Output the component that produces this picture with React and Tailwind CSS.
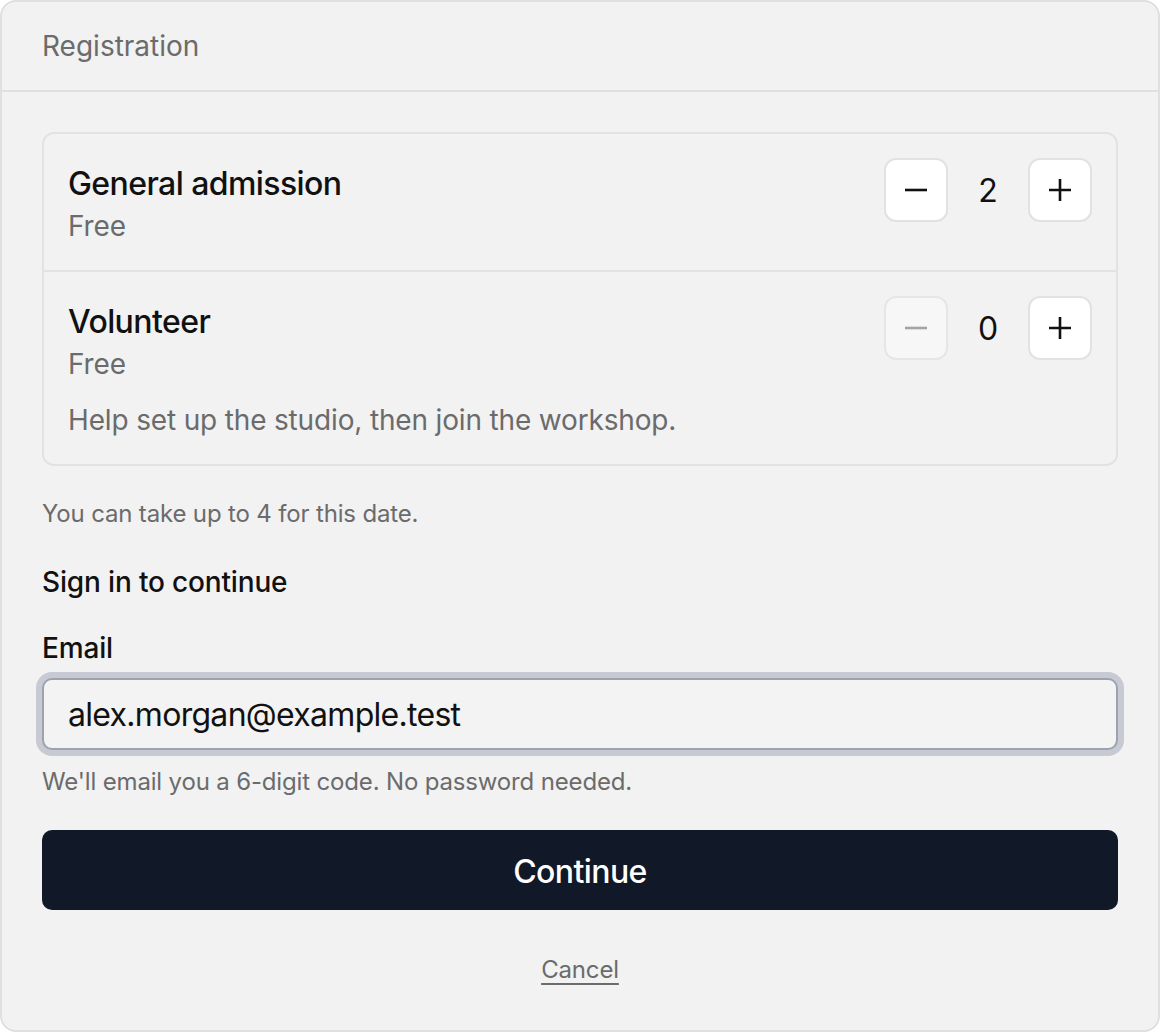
import React from "react";

function MinusIcon({ className }) {
  return (
    <svg width="24" height="24" viewBox="0 0 24 24" className={className} fill="none" stroke="currentColor" strokeWidth="2.6" strokeLinecap="butt">
      <path d="M1 12h22" />
    </svg>
  );
}

function PlusIcon({ className }) {
  return (
    <svg width="24" height="24" viewBox="0 0 24 24" className={className} fill="none" stroke="currentColor" strokeWidth="2.6" strokeLinecap="butt">
      <path d="M1 12h22M12 1v22" />
    </svg>
  );
}

function Stepper({ value, minDisabled }) {
  return (
    <div className="flex items-center">
      <button
        className={
          minDisabled
            ? "w-16 h-16 flex items-center justify-center rounded-[12px] border-2 border-[#e6e6e6] bg-[#f7f7f7] text-[#a3a3a3]"
            : "w-16 h-16 flex items-center justify-center rounded-[12px] border-2 border-[#e2e2e2] bg-white text-[#111111]"
        }
      >
        <MinusIcon />
      </button>
      <span className="w-20 text-center text-[32px] leading-[48px] text-[#111111] pt-[2px]">{value}</span>
      <button className="w-16 h-16 flex items-center justify-center rounded-[12px] border-2 border-[#e2e2e2] bg-white text-[#111111]">
        <PlusIcon />
      </button>
    </div>
  );
}

export default function App() {
  return (
    <div className="w-[1160px] h-[1032px] bg-white" style={{ fontFamily: "Inter, 'Noto Sans', sans-serif" }}>
      <div className="h-full border-2 border-[#e0e0e0] rounded-[16px] bg-[#f2f2f2] flex flex-col tracking-[-0.01em]">
        <div className="px-10 py-6 border-b-2 border-[#e0e0e0]">
          <h2 className="text-[28px] leading-[40px] text-[#6b6b6b] tracking-normal">Registration</h2>
        </div>
        <div className="px-10 pt-10 pb-10 flex flex-col">
          <div className="border-2 border-[#e2e2e2] rounded-[12px]">
            <div className="p-6 flex items-start justify-between border-b-2 border-[#e2e2e2]">
              <div>
                <div className="text-[32px] leading-[44px] font-medium text-[#111111] tracking-[-0.018em] pt-[4px]">General admission</div>
                <div className="text-[28px] leading-[40px] text-[#6b6b6b]">Free</div>
              </div>
              <Stepper value={2} />
            </div>
            <div className="p-6 flex items-start justify-between">
              <div>
                <div className="text-[32px] leading-[44px] font-medium text-[#111111] tracking-[-0.018em] pt-[4px]">Volunteer</div>
                <div className="text-[28px] leading-[40px] text-[#6b6b6b]">Free</div>
                <div className="mt-4 text-[28px] leading-[40px] text-[#6b6b6b]">Help set up the studio, then join the workshop.</div>
              </div>
              <Stepper value={0} minDisabled />
            </div>
          </div>
          <p className="mt-8 text-[24px] leading-[32px] text-[#6b6b6b]">You can take up to 4 for this date.</p>
          <h3 className="mt-8 text-[28px] leading-[40px] font-medium text-[#111111]">Sign in to continue</h3>
          <label className="mt-[26px] text-[28px] leading-[40px] font-medium text-[#111111]">Email</label>
          <div className="mt-[10px] rounded-[12px]">
            <input
              readOnly
              value="alex.morgan@example.test"
              className="w-full h-[72px] px-6 rounded-[10px] border-2 border-[#9ca3af] bg-[#f3f3f3] text-[32px] text-[#111111] outline-none ring-[6px] ring-[#c7cad2] tracking-[-0.022em]"
              style={{ fontFamily: "Inter, 'Noto Sans', sans-serif" }}
            />
          </div>
          <p className="mt-4 text-[24px] leading-[32px] text-[#6b6b6b]">We'll email you a 6-digit code. No password needed.</p>
          <button className="mt-8 h-20 w-full rounded-[10px] bg-[#111827] text-white text-[32px] font-medium pt-[4px] tracking-[-0.018em]">Continue</button>
          <div className="mt-10 flex justify-center">
            <a className="text-[24px] leading-[40px] text-[#6b6b6b] underline underline-offset-[5px] decoration-2">Cancel</a>
          </div>
        </div>
      </div>
    </div>
  );
}
